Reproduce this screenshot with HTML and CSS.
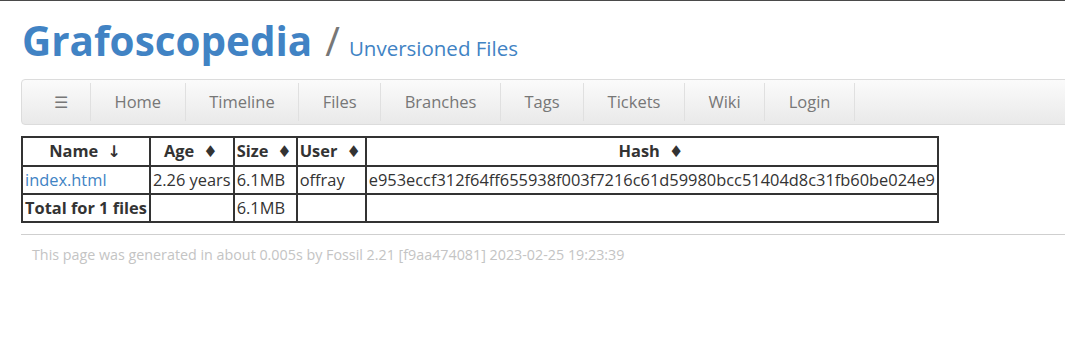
FILE: index.html
```html
<!DOCTYPE html>
<html>
<head>
<meta charset="utf-8">
<title>Grafoscopedia: Unversioned Files</title>
<link rel="stylesheet" href="styles.css">
</head>
<body>
<div class="page">
  <div class="header">
    <span class="title">Grafoscopedia</span>
    <span class="slash">/</span>
    <span class="subtitle">Unversioned Files</span>
  </div>
  <div class="mainmenu">
    <a class="item hamburger" href="#">☰</a>
    <a class="item" href="#">Home</a>
    <a class="item" href="#">Timeline</a>
    <a class="item" href="#">Files</a>
    <a class="item" href="#">Branches</a>
    <a class="item" href="#">Tags</a>
    <a class="item" href="#">Tickets</a>
    <a class="item" href="#">Wiki</a>
    <a class="item" href="#">Login</a>
  </div>
  <div class="content">
    <table class="uvlist">
      <thead>
        <tr>
          <th>Name<span class="sort arrow">↓</span></th>
          <th>Age<span class="sort">♦</span></th>
          <th>Size<span class="sort">♦</span></th>
          <th>User<span class="sort">♦</span></th>
          <th>Hash<span class="sort">♦</span></th>
        </tr>
      </thead>
      <tbody>
        <tr>
          <td><a href="#">index.html</a></td>
          <td>2.26 years</td>
          <td>6.1MB</td>
          <td>offray</td>
          <td>e953eccf312f64ff655938f003f7216c61d59980bcc51404d8c31fb60be024e9</td>
        </tr>
      </tbody>
      <tfoot>
        <tr>
          <td class="total">Total for 1 files</td>
          <td></td>
          <td>6.1MB</td>
          <td></td>
          <td></td>
        </tr>
      </tfoot>
    </table>
  </div>
  <div class="footer">This page was generated in about 0.005s by Fossil 2.21 [f9aa474081] 2023-02-25 19:23:39</div>
</div>
</body>
</html>
```
FILE: styles.css
```css
html, body {
  margin: 0;
  padding: 0;
  overflow-x: hidden;
}
body {
  font-family: "Open Sans", "Liberation Sans", sans-serif;
  color: #333;
  background: #fff;
  border-top: 1px solid #4a4a4a;
}
a {
  color: #4183c4;
  text-decoration: none;
}
.page {
  padding-left: 21px;
  margin-right: -12px;
}
.header {
  display: flex;
  align-items: baseline;
  margin-top: 16px;
  line-height: 48px;
  padding-left: 1px;
}
.title {
  font-size: 40.4px;
  font-weight: 700;
  color: #4183c4;
}
.slash {
  font-size: 40px;
  color: #777;
  margin-left: 13px;
  margin-right: 9px;
}
.subtitle {
  font-size: 20.5px;
  color: #4183c4;
}
.mainmenu {
  display: flex;
  margin-top: 7px;
  height: 44px;
  padding-left: 10px;
  border: 1px solid #dcdcdc;
  border-radius: 4px;
  background: linear-gradient(to bottom, #fbfbfb, #e9e9e9);
}
.mainmenu .item {
  display: block;
  font-size: 16.5px;
  line-height: 38px;
  margin: 3px 0;
  padding: 0 23.5px;
  color: #777;
  border-right: 1px solid #e0e0e0;
}
.mainmenu .hamburger {
  padding: 0 22px;
  font-size: 16px;
}
.content {
  margin-top: 11px;
}
.uvlist {
  border-collapse: collapse;
  border: 2px solid #333;
  font-size: 16.4px;
}
.uvlist th, .uvlist td {
  border: 2px solid #333;
  line-height: 22px;
  padding: 2px 2px;
  white-space: nowrap;
  text-align: left;
}
.uvlist th {
  text-align: center;
  font-weight: 700;
  padding-right: 4px;
}
.uvlist .sort {
  margin-left: 9px;
  font-size: 16px;
  font-family: "DejaVu Sans", sans-serif;
}
.uvlist .arrow {
  font-size: 16px;
  font-weight: 700;
}
.uvlist .total {
  font-weight: 700;
}
.footer {
  margin-top: 11px;
  border-top: 1px solid #cfcfcf;
  padding: 10px 11px;
  font-size: 14.3px;
  line-height: 20px;
  color: #c4c4c4;
}
```
